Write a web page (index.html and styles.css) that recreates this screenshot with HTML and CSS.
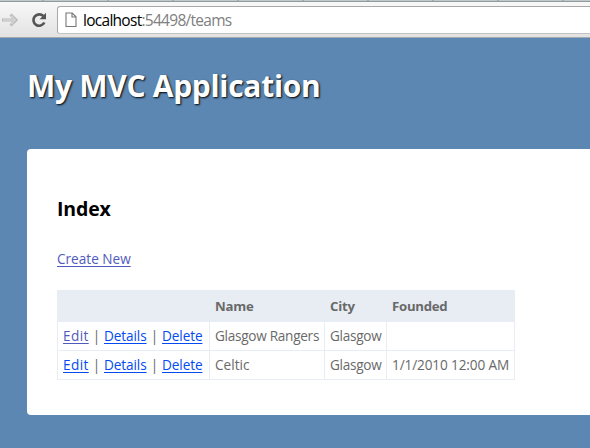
FILE: index.html
```html
<!DOCTYPE html>
<html lang="en">
<head>
<meta charset="utf-8">
<title>Index</title>
<link rel="stylesheet" href="styles.css">
</head>
<body>
<div class="tabs"></div>
<div class="toolbar">
  <svg class="forward" width="18" height="16" viewBox="0 0 18 16"><path d="M1 8H15M9.5 2.5L15 8L9.5 13.5" fill="none" stroke="#b9b9b9" stroke-width="3"/><path d="M2 8H14M10 3.5L14.3 8L10 12.5" fill="none" stroke="#d5d5d5" stroke-width="1.3"/></svg>
  <svg class="reload" width="16" height="16" viewBox="0 0 16 16"><path d="M12.4 4.2A5.7 5.7 0 1 0 13.3 10.5" fill="none" stroke="#555" stroke-width="2.7"/><path d="M15 .8V7.2H8.6Z" fill="#555"/></svg>
  <div class="address">
    <svg class="page-icon" width="12" height="16" viewBox="0 0 12 16"><path d="M1 1H7.2L11 4.8V14.5H1ZM7 1V5H11" fill="#fff" stroke="#777" stroke-width="1.1"/></svg>
    <span class="url"><span class="host">localhost</span>:54498/teams</span>
  </div>
</div>
<main class="page">
  <h1>My MVC Application</h1>
  <section class="content">
    <h2>Index</h2>
    <p><a class="visited create" href="#">Create New</a></p>
    <table>
      <colgroup><col class="c-actions"><col class="c-name"><col class="c-city"><col class="c-founded"></colgroup>
      <thead><tr><th></th><th>Name</th><th>City</th><th class="founded">Founded</th></tr></thead>
      <tbody>
        <tr><td><div class="actions"><a class="visited edit" href="#">Edit</a><i>|</i><a class="details" href="#">Details</a><i>|</i><a href="#">Delete</a></div></td><td><span class="name">Glasgow Rangers</span></td><td><span class="name">Glasgow</span></td><td></td></tr>
        <tr><td><div class="actions"><a class="edit" href="#">Edit</a><i>|</i><a class="details" href="#">Details</a><i>|</i><a href="#">Delete</a></div></td><td>Celtic</td><td><span class="name">Glasgow</span></td><td><span class="date">1/1/2010 12:00 AM</span></td></tr>
      </tbody>
    </table>
  </section>
</main>
</body>
</html>
```
FILE: styles.css
```css
* { box-sizing: border-box; }
body { margin: 0; height: 448px; overflow: hidden; background: #5c87b2; color: #696969; font: 13.6px/20px "Trebuchet MS", "Open Sans", sans-serif; }
.tabs { height: 2px; background: repeating-linear-gradient(90deg, #c1c8cc 0 63px, #a4abae 63px 65px); background-position: -21px 0; border-bottom: 1px solid #929a9e; }
.toolbar { height: 36px; display: flex; align-items: flex-start; background: linear-gradient(#f8f8f8, #e2e2e2); border-bottom: 1px solid #a5a9ad; }
.forward { flex: none; margin: 10px 0 0 1px; }
.reload { flex: none; margin: 10px 0 0 12px; }
.address { flex: 1; height: 28px; margin: 4px 0 0 10px; border: 1px solid #a9a9a9; border-right: 0; border-bottom-color: #c4c4c4; border-radius: 3px 0 0 3px; background: #fff; display: flex; }
.page-icon { flex: none; margin: 5px 0 0 7px; }
.url { margin-left: 6px; font: 15.5px/26px "Open Sans", sans-serif; color: #808080; letter-spacing: -.72px; white-space: nowrap; }
.host { color: #000; }
.page { padding-left: 27px; }
h1 { margin: 0; height: 111px; padding-top: 28px; color: #fff; font-size: 30px; line-height: 39px; font-weight: 700; letter-spacing: -.3px; text-shadow: 1px 1px 2px #000; white-space: nowrap; }
.content { height: 266px; padding: 48px 0 0 30px; background: #fff; border-radius: 4px 0 0 4px; }
h2 { margin: 0; color: #000; font-size: 19.5px; line-height: 24px; font-weight: 700; letter-spacing: -.15px; }
p { margin: 28px 0 21px; line-height: 20px; }
a { color: #034af3; text-decoration: underline; text-underline-offset: 2px; }
a.visited { color: #505abc; }
table { width: 457px; table-layout: fixed; border-collapse: collapse; }
.c-actions { width: 152px; } .c-name { width: 115px; } .c-city { width: 62px; } .c-founded { width: 128px; }
th, td { padding: 0 5px; border: 1px solid #e8edf4; text-align: left; white-space: nowrap; }
th { height: 31px; background: #e8edf4; font-size: 13.2px; font-weight: 700; letter-spacing: -.25px; }
td { height: 29px; }
.actions { display: flex; }
.actions a { letter-spacing: -.1px; }
.actions .edit { width: 26px; letter-spacing: .4px; }
i { width: 15px; text-align: center; font-style: normal; }
.details { width: 43px; }
.name { letter-spacing: -.28px; }
.date { letter-spacing: -.12px; }
```
